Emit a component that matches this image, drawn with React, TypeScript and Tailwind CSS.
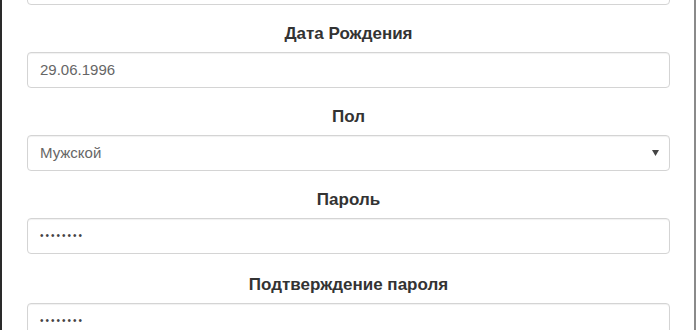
import { FC } from "react";

const inputCls =
  "h-[36px] w-full rounded-[4px] border border-[#d4d4d4] bg-white px-[12px] flex items-center text-[15px] text-[#666] shadow-[inset_0_1px_1px_rgba(0,0,0,0.06)]";

const Label: FC<{ text: string; extra?: string }> = ({ text, extra = "" }) => (
  <div
    className={`mt-[19px] mb-[8px] h-[20px] text-center text-[17px] leading-[20px] font-bold text-[#333] ${extra}`}
  >
    {text}
  </div>
);

const Dots: FC = () => (
  <span className="tracking-[2px] text-[10px] text-[#444] leading-none">••••••••</span>
);

export default function App() {
  return (
    <div
      className="h-[330px] w-[700px] overflow-hidden bg-white"
      style={{ fontFamily: '"Liberation Sans", Arial, sans-serif' }}
    >
      <div className="h-[330px] w-[696px] overflow-hidden border-l-[2px] border-l-[#2a2a2a] border-r-[2px] border-r-[#8a8a8a] pl-[25px] pr-[24px]">
        <div className={`${inputCls} -mt-[31px]`} />

        <Label text="Дата Рождения" />
        <div className={inputCls}>29.06.1996</div>

        <Label text="Пол" />
        <div className={`${inputCls} justify-between`}>
          <span>Мужской</span>
          <svg width="7" height="6" viewBox="0 0 7 6" className="mr-[-2px]">
            <path d="M0 0 L7 0 L3.5 6 Z" fill="#444" />
          </svg>
        </div>

        <Label text="Пароль" />
        <div className={inputCls}>
          <Dots />
        </div>

        <Label text="Подтверждение пароля" extra="!mt-[21px]" />
        <div className={inputCls}>
          <Dots />
        </div>
      </div>
    </div>
  );
}
